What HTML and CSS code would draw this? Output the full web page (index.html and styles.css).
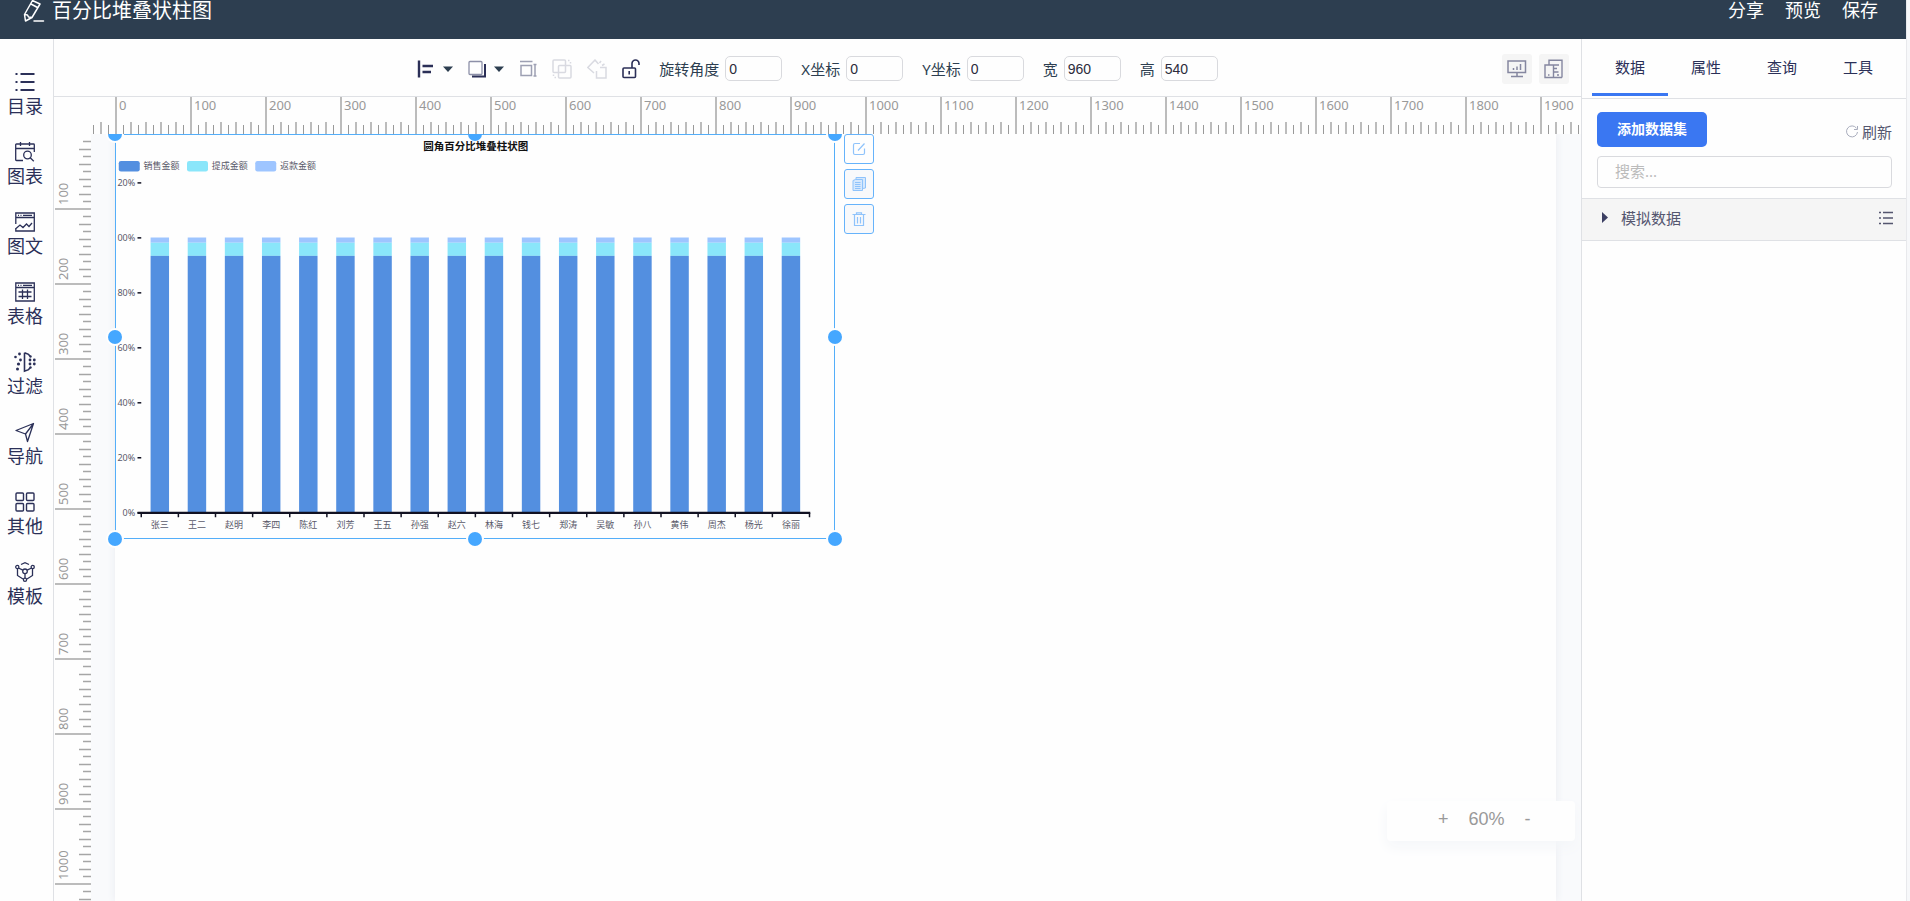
FILE: index.html
```html
<!DOCTYPE html>
<html lang="zh-CN">
<head>
<meta charset="utf-8">
<title>百分比堆叠状柱图</title>
<link rel="stylesheet" href="styles.css">
</head>
<body>
<div class="app">
  <header class="header">
    <svg class="header-icon" viewBox="0 0 22 22" fill="none" stroke="currentColor" stroke-width="1.500" stroke-linejoin="round" stroke-linecap="round"><path d="M9.500 .5 17 4 9 17.500 2.500 21 1.500 14.500zM8 4l6.500 3.500M1.500 14.500l3 .5 1 2 3.500.5M11 21h9.500"/></svg>
    <h1 class="header-title">百分比堆叠状柱图</h1>
    <nav class="header-actions">
      <a href="#share">分享</a>
      <a href="#preview">预览</a>
      <a href="#save">保存</a>
    </nav>
  </header>

  <nav class="sidebar">
    <a class="side-item" href="#catalog">
      <svg class="side-icon" viewBox="0 0 20 20" fill="none" stroke="currentColor" stroke-width="2"><path d="M.5 2h2M5.500 2h14M.5 10h2M5.500 10h14M.5 18h2M5.500 18h14"/></svg>
      <span>目录</span>
    </a>
    <a class="side-item" href="#charts">
      <svg class="side-icon" viewBox="0 0 20 20" fill="none" stroke="currentColor" stroke-width="1.300"><path d="M8 18.500H1.500q-.8 0-.8-.8V2.800q0-.8.8-.8h17q.8 0 .8.8V10M.7 6.500h18.600M5.500 0v4M14.500 0v4"/><circle cx="12.500" cy="13" r="3.800"/><path d="m15.200 15.800 3.600 3.400"/></svg>
      <span>图表</span>
    </a>
    <a class="side-item" href="#media">
      <svg class="side-icon" viewBox="0 0 20 20" fill="none" stroke="currentColor" stroke-width="1.300"><path d="M.8 12V1h18.500v18H.8v-3M.8 5.500h18.500M3 3.300h1M5.500 3.300h1M8 3.300h9M1 16.500l4-3.500 3 2.500 3.500-3.500 2.500 2.500 3-3.500"/></svg>
      <span>图文</span>
    </a>
    <a class="side-item" href="#tables">
      <svg class="side-icon" viewBox="0 0 20 20" fill="none" stroke="currentColor" stroke-width="1.300"><path d="M.8 1h18.500v18H.8zM.8 5.500h18.500M3 3.300h1M5.500 3.300h1M8 3.300h9M3.500 10h13M3.500 14.500h13M7.500 7.500v9.500M12.500 7.500v9.500"/></svg>
      <span>表格</span>
    </a>
    <a class="side-item" href="#filters">
      <svg class="side-icon" viewBox="0 0 20 20" fill="none" stroke="currentColor" stroke-width="1.600"><path d="M9.500 .8v18.400l4-1.500 1.500-2M9.500 .8l4 1.500 1.500 2"/><g fill="currentColor" stroke="none"><circle cx="4.500" cy="2" r="1.400"/><circle cx="0.500" cy="5" r="1.300"/><circle cx="5.500" cy="8" r="1.400"/><circle cx="3.500" cy="12" r="1.600"/><circle cx="2.500" cy="17" r="1.500"/><circle cx="15" cy="8" r="1.400"/><circle cx="19.300" cy="8" r="1.400"/><circle cx="15" cy="12" r="1.400"/><circle cx="19.300" cy="12" r="1.400"/><circle cx="15.500" cy="4.500" r="1.200"/><circle cx="15.500" cy="15.500" r="1.200"/></g></svg>
      <span>过滤</span>
    </a>
    <a class="side-item" href="#navigation">
      <svg class="side-icon" viewBox="0 0 20 20" fill="none" stroke="currentColor" stroke-width="1.300" stroke-linejoin="round"><path d="M18.500 1.500 1 8.500l9.500 3.500 2 7.500zM18.500 1.500l-8 10.500"/></svg>
      <span>导航</span>
    </a>
    <a class="side-item" href="#other">
      <svg class="side-icon" viewBox="0 0 20 20" fill="none" stroke="currentColor" stroke-width="1.400"><rect x="1" y="1" width="7.500" height="7.500" rx="1"/><rect x="11.500" y="1" width="7.500" height="7.500" rx="1"/><rect x="1" y="11.500" width="7.500" height="7.500" rx="1"/><rect x="11.500" y="11.500" width="7.500" height="7.500" rx="1"/></svg>
      <span>其他</span>
    </a>
    <a class="side-item" href="#templates">
      <svg class="side-icon" viewBox="0 0 20 20" fill="none" stroke="currentColor" stroke-width="1.300"><path d="M6 2.500 10 .7l4 1.800M2.500 7v6.500L8 17M17.500 7v6.500L12 17M3.500 6 7.800 8.200M16.500 6l-4.300 2.200M10 11.500V16"/><circle cx="10" cy="9.300" r="2.300"/><circle cx="2.300" cy="5" r="1.600"/><circle cx="17.700" cy="5" r="1.600"/><circle cx="10" cy="17.800" r="1.600"/></svg>
      <span>模板</span>
    </a>
  </nav>

  <main class="workspace">
    <div class="toolbar">
      <div class="tools">
        <div class="tool-icons">
          <button class="tool" aria-label="对齐">
            <svg width="18" height="20" viewBox="0 0 18 20" fill="none" stroke="currentColor" stroke-width="2.400"><path d="M2 1.500v17M5.500 7H16M5.500 13h8.500"/></svg>
            <svg class="caret" width="10" height="6" viewBox="0 0 10 6"><path d="M0 .5h10L5 6z"/></svg>
          </button>
          <button class="tool" aria-label="图层">
            <svg width="18" height="20" viewBox="0 0 18 20" fill="none"><rect x="1" y="2.500" width="13" height="13" rx="1" stroke="#8d90a8" stroke-width="1.300"/><path d="M17 5v12.500H4" stroke="currentColor" stroke-width="2"/></svg>
            <svg class="caret" width="10" height="6" viewBox="0 0 10 6"><path d="M0 .5h10L5 6z"/></svg>
          </button>
          <button class="tool tool-muted" aria-label="等尺寸">
            <svg width="18" height="20" viewBox="0 0 18 20" fill="none" stroke="currentColor" stroke-width="1.500"><path d="M2 6.500h10.500v10H2zM1 2.500h12.500M16 6v11M14.500 5.500h3M14.500 17h3"/></svg>
          </button>
          <button class="tool tool-off" aria-label="组合">
            <svg width="20" height="20" viewBox="0 0 20 20" fill="none" stroke="currentColor" stroke-width="1.500"><rect x="1" y="1" width="12.500" height="12.500" rx="1"/><rect x="6.500" y="6.500" width="12.500" height="12.500" rx="1"/><path d="M16 1.500h1.500M18.500 3v1.500M4 18.500H2.500M1.500 17v-1.500"/></svg>
          </button>
          <button class="tool tool-off" aria-label="取消组合">
            <svg width="20" height="20" viewBox="0 0 20 20" fill="none" stroke="currentColor" stroke-width="1.500"><path d="M11.500 5 8 1 .8 8.500 7 14M13 8.500h6v10.500h-9.500V12M12.500 4 14 2M15 6.500l2.500-1.500"/></svg>
          </button>
          <button class="tool" aria-label="解锁">
            <svg width="18" height="20" viewBox="0 0 18 20" fill="none" stroke="currentColor" stroke-width="1.600"><rect x="1" y="9" width="12.500" height="9.500" rx="1"/><path d="M7.200 12v3.500M10 9V4.500a3.500 3.500 0 0 1 7 0V6"/></svg>
          </button>
        </div>
        <label class="field">旋转角度<input type="text" value="0"></label>
        <label class="field">X坐标<input type="text" value="0"></label>
        <label class="field">Y坐标<input type="text" value="0"></label>
        <label class="field">宽<input type="text" value="960"></label>
        <label class="field">高<input type="text" value="540"></label>
      </div>
      <div class="view-buttons">
        <button class="view-button" aria-label="画布显示">
          <svg width="20" height="18" viewBox="0 0 20 18" fill="none" stroke="currentColor" stroke-width="1.500"><rect x="1" y="1" width="17.500" height="11.500"/><path d="M6.500 10V8M10 10V6.500M13.500 10V4M10 12.500V16M4 16.500h12"/></svg>
        </button>
        <button class="view-button" aria-label="标尺">
          <svg width="20" height="20" viewBox="0 0 20 20" fill="none" stroke="currentColor" stroke-width="1.400"><path d="M5 6V1.200h13V18.500M1 6h8.500v12.500H1zM9.500 18.500H18M10 6h5M10 9.500h3M10 13h4.500M4 16h1.500M13 16h2"/></svg>
        </button>
      </div>
    </div>

    <div class="editor">
      <div class="ruler-x">
        <svg class="ticks" aria-hidden="true">
          <defs><pattern id="tx" x="24" width="75" height="37" patternUnits="userSpaceOnUse">
            <path d="M1 0V37" stroke="#a6a6a6" stroke-width="1.500"/>
            <path d="M16 25v12M31 25v12M46 25v12M61 25v12" stroke="#a6a6a6" stroke-width="1.500"/>
            <path d="M8.500 28v9M23.500 28v9M38.500 28v9M53.500 28v9M68.500 28v9" stroke="#999"/>
          </pattern></defs>
          <rect x="0" y="25" width="24" height="12" fill="url(#tx)"/>
          <rect x="24" width="100%" height="37" fill="url(#tx)"/>
        </svg>
        <ol class="marks-x"><li>0</li><li>100</li><li>200</li><li>300</li><li>400</li><li>500</li><li>600</li><li>700</li><li>800</li><li>900</li><li>1000</li><li>1100</li><li>1200</li><li>1300</li><li>1400</li><li>1500</li><li>1600</li><li>1700</li><li>1800</li><li>1900</li></ol>
      </div>
      <div class="ruler-y">
        <svg class="ticks" aria-hidden="true">
          <defs><pattern id="ty" y="1" width="37" height="75" patternUnits="userSpaceOnUse">
            <path d="M1 74H37" stroke="#a6a6a6" stroke-width="1.500"/>
            <path d="M25 14.500h12M25 29.500h12M25 44.500h12M25 59.500h12" stroke="#a6a6a6" stroke-width="1.500"/>
            <path d="M29 6.500h8M29 21.500h8M29 36.500h8M29 51.500h8M29 66.500h8" stroke="#a6a6a6" stroke-width="1.500"/>
          </pattern></defs>
          <rect y="1" width="37" height="100%" fill="url(#ty)"/>
        </svg>
        <ol class="marks-y"><li>100</li><li>200</li><li>300</li><li>400</li><li>500</li><li>600</li><li>700</li><li>800</li><li>900</li><li>1000</li></ol>
      </div>

      <div class="stage">
        <div class="page">
          <div class="widget">
            <svg class="chart" viewBox="0 0 960 540" role="img" aria-label="圆角百分比堆叠柱状图"></svg>
            <span class="handle top left"></span><span class="handle top center"></span><span class="handle top right"></span>
            <span class="handle middle left"></span><span class="handle middle right"></span>
            <span class="handle bottom left"></span><span class="handle bottom center"></span><span class="handle bottom right"></span>
            <div class="widget-actions">
              <button aria-label="编辑"><svg width="14" height="14" viewBox="0 0 14 14" fill="none" stroke="currentColor" stroke-width="1.200"><path d="M8 1.500H3Q1.500 1.500 1.500 3v8q0 1.500 1.500 1.500h8q1.500 0 1.500-1.500V6.500M6 8.500 12.500 1.500"/></svg></button>
              <button aria-label="复制"><svg width="14" height="14" viewBox="0 0 14 14" fill="none" stroke="currentColor"><path fill="#d5e8fd" d="M1 3.500 3.500 2.500H10.500V13.500H1zM4 2.500V.5h9.500V11l-3 .5M3 5.500h5.500M3 7.500h5.500M3 9.500h5.500M3 11.500h5.500"/></svg></button>
              <button aria-label="删除"><svg width="14" height="14" viewBox="0 0 14 14" fill="none" stroke="currentColor" stroke-width="1.200"><path d="M.5 2.500h13M4.500 2.500V.8h5v1.700M2.500 2.500v11h9v-11M5.500 5v6.500M8.500 5v6.500"/></svg></button>
            </div>
          </div>
        </div>
      </div>
      <div class="zoom-box">
        <button>+</button><output>60%</output><button>-</button>
      </div>
    </div>
  </main>

  <aside class="panel">
    <nav class="tabs">
      <a class="tab active" href="#data">数据</a>
      <a class="tab" href="#props">属性</a>
      <a class="tab" href="#query">查询</a>
      <a class="tab" href="#tools">工具</a>
    </nav>
    <div class="panel-tools">
      <div class="panel-row">
        <button class="primary">添加数据集</button>
        <button class="refresh"><svg width="14" height="14" viewBox="0 0 14 14" fill="none" stroke="#a9adbd"><path d="M11.500 3.200a5.500 5.500 0 1 0 1 3.800M12.500 1v3.500H9"/></svg>刷新</button>
      </div>
      <input class="search" type="text" placeholder="搜索..." aria-label="搜索">
    </div>
    <div class="dataset">
      <svg class="dataset-caret" width="6" height="12" viewBox="0 0 6 12"><path d="M0 0v11l6-5.500z" fill="currentColor"/></svg>
      <span>模拟数据</span>
      <button class="dataset-menu" aria-label="菜单"><svg width="14" height="14" viewBox="0 0 14 14" fill="none" stroke="currentColor" stroke-width="1.500"><path d="M0 1.500h2M4 1.500h10M0 7h2M4 7h10M0 12.500h2M4 12.500h10"/></svg></button>
    </div>
  </aside>
</div>
<script src="chart.js"></script>
</body>
</html>
```
FILE: styles.css
```css
* { box-sizing: border-box; }

body {
  margin: 0;
  background: #f7f8fa;
  color: #2b3058;
  font-family: "Noto Sans", "Noto Sans CJK SC", sans-serif;
  font-size: 15px;
}

a { color: inherit; text-decoration: none; }
ol { margin: 0; padding: 0; list-style: none; }
svg { display: block; flex: none; }

button {
  padding: 0;
  border: 0;
  background: none;
  color: inherit;
  font: inherit;
}

.app {
  display: grid;
  grid-template: auto 1fr / 54px 1fr 325px;
  height: 100vh;
  margin-right: 4px;
  background: #fefefe;
  box-shadow: 1px 0 #e8e9ec;
  overflow: hidden;
}

.header {
  grid-column: 1 / -1;
  display: flex;
  align-items: flex-start;
  height: 39px;
  padding: 0 28px 0 23px;
  background: #2d3e50;
  color: #fff;
}
.header-icon { width: 22px; height: 22px; margin-right: 7px; }
.header-title { margin: 0; font-size: 20px; font-weight: 400; line-height: 22px; }
.header-actions { display: flex; gap: 21px; margin-left: auto; font-size: 18px; line-height: 20px; }

.sidebar {
  display: flex;
  flex-direction: column;
  gap: 24px;
  padding: 33px 3px 0 0;
  border-right: 1px solid #dfe1e5;
}
.side-item {
  display: flex;
  flex-direction: column;
  align-items: center;
  gap: 4px;
  height: 46px;
  font-size: 18px;
  line-height: 20px;
}
.side-icon { width: 20px; height: 20px; overflow: visible; }

.workspace { display: flex; flex-direction: column; min-width: 0; min-height: 0; }

.toolbar {
  display: grid;
  grid-template-columns: 1fr auto 1fr;
  align-items: center;
  height: 58px;
  padding: 2px 12px 0;
  border-bottom: 1px solid #dfe1e5;
}
.tools { grid-column: 2; display: flex; align-items: center; gap: 19px; }
.tool-icons { display: flex; align-items: center; gap: 15px; color: #2b2f57; }
.tool { display: flex; align-items: center; gap: 8px; }
.tool-muted { color: #9da0b3; }
.tool-off { color: #d9dae1; }
.caret { fill: #2d3e50; }
.field { display: flex; align-items: center; gap: 6px; color: #2d3e50; line-height: 24px; }
.field input {
  width: 57px;
  height: 25px;
  padding: 0 3px;
  border: 1px solid #d9dade;
  border-radius: 5px;
  background: #fefefe;
  color: #2b2b3c;
  font: 14px "Liberation Sans", Arial, sans-serif;
}
.view-buttons { display: flex; justify-content: flex-end; gap: 7px; }
.view-button {
  display: grid;
  place-items: center;
  width: 30px;
  height: 30px;
  border-radius: 3px;
  background: #f5f5f5;
  color: #8587a0;
}

.editor {
  position: relative;
  flex: 1;
  display: grid;
  grid-template: 37px 1fr / 37px 1fr;
  min-height: 0;
  overflow: hidden;
  color: #999;
  font-size: 13px;
}
.ruler-x { grid-column: 2; position: relative; overflow: hidden; }
.ruler-y { grid-row: 2; position: relative; overflow: hidden; }
.ticks { position: absolute; inset: 0; width: 100%; height: 100%; }
.marks-x { display: flex; padding-left: 24px; line-height: 17px; }
.marks-x li { flex: none; width: 75px; padding-left: 4px; }
.marks-y li {
  height: 75px;
  padding-top: 4px;
  width: 18px;
  line-height: 18px;
  writing-mode: vertical-rl;
  transform: rotate(180deg);
}

.stage { min-width: 0; padding: 0 25px 0 24px; background: #f9fafc; overflow: hidden; }
.page { height: 100%; background: #fefefe; box-shadow: 0 0 8px #e9ebf0; }
.widget { position: relative; width: 720px; height: 405px; outline: 1px solid #54aef9; outline-offset: -1px; }
.chart { width: 100%; height: 100%; fill: #5a5a6a; font-size: 12px; }
.chart-title { fill: #111; font-size: 14px; font-weight: 700; text-anchor: middle; }
.label-x { text-anchor: middle; }
.label-y { text-anchor: end; }
.axis { stroke: #111122; stroke-width: 2; fill: none; }
.axis-base { stroke-width: 3; }
.sales { fill: #538fe0; }
.commission { fill: #8ae6fa; }
.refund { fill: #9ec5ff; }

.handle {
  position: absolute;
  width: 14px;
  height: 14px;
  margin: -7px;
  border-radius: 50%;
  background: #45a7ff;
  box-shadow: 0 0 0 2px #fefefe;
}
.handle.top.center { box-shadow: none; }
.top { top: 0; }
.middle { top: 50%; }
.bottom { top: 100%; }
.left { left: 0; }
.center { left: 50%; }
.right { left: 100%; }

.widget-actions { position: absolute; top: 0; left: 100%; display: grid; gap: 5px; margin-left: 9px; }
.widget-actions button {
  display: grid;
  place-items: center;
  width: 30px;
  height: 30px;
  border: 1px solid #66b3fb;
  border-radius: 3px;
  background: #f8f9fb;
  color: #8fc3fb;
}
.widget-actions button:first-child { background: #fefefe; }

.zoom-box {
  position: absolute;
  right: 6px;
  bottom: 60px;
  display: flex;
  gap: 20px;
  width: 188px;
  height: 40px;
  padding: 0 50px 4px 51px;
  border-radius: 4px;
  background: #fefefe;
  box-shadow: 0 6px 14px #f4f6f9;
  font: 18px/36px "Liberation Sans", Arial, sans-serif;
}

.panel { border-left: 1px solid #dfe1e5; }
.tabs { display: flex; height: 60px; padding: 0 10px 2px; border-bottom: 1px solid #dfe1e5; }
.tab { flex: 1; text-align: center; line-height: 57px; }
.tab.active { border-bottom: 3px solid #3a77f2; }
.panel-tools { display: grid; gap: 9px; padding: 13px 14px 10px 15px; }
.panel-row { display: flex; justify-content: space-between; align-items: center; }
.primary {
  width: 110px;
  height: 35px;
  padding-bottom: 3px;
  border-radius: 5px;
  background: #3a77f2;
  color: #fff;
  font-size: 14px;
  font-weight: 700;
}
.refresh { display: flex; align-items: center; gap: 3px; padding-top: 4px; color: #54566f; }
.search {
  width: 100%;
  height: 32px;
  padding: 0 17px 2px;
  border: 1px solid #d9dade;
  border-radius: 4px;
  background: #fefefe;
  font: inherit;
}
.search::placeholder { color: #bbb; }
.dataset {
  display: flex;
  align-items: center;
  height: 43px;
  padding: 0 13px 4px 20px;
  border: solid #dfe1e5;
  border-width: 1px 0;
  background: #f5f5f5;
  color: #54566f;
}
.dataset-caret { margin-right: 13px; color: #3c3f63; }
.dataset-menu { margin-left: auto; }
```
FILE: chart.js
```js
const names = ["张三", "王二", "赵明", "李四", "陈红", "刘芳", "王五", "孙强", "赵六", "林海", "钱七", "郑涛", "吴敏", "孙八", "黄伟", "周杰", "杨光", "徐丽"];
const legend = [["sales", "销售金额", 5], ["commission", "提成金额", 96], ["refund", "返款金额", 187]];
const scale = ["0%", "20%", "40%", "60%", "80%", "00%", "20%"];
const left = 35, right = 926, base = 505, step = 73.3;
const slot = (right - left) / names.length;

let out = '<text class="chart-title" x="481" y="21">圆角百分比堆叠柱状图</text>';
for (const [key, text, x] of legend) {
  out += `<rect class="${key}" x="${x}" y="36" width="28" height="14" rx="3"/><text x="${x + 33}" y="46">${text}</text>`;
}
scale.forEach((text, i) => {
  const y = base - i * step;
  out += `<path class="axis" d="M${left - 5} ${y}h5"/><text class="label-y" x="27" y="${y + 4}">${text}</text>`;
});
names.forEach((name, i) => {
  const mid = left + (i + 0.5) * slot;
  const bar = (key, top, bottom) => `<rect class="${key}" x="${mid - 12.3}" y="${top}" width="24.6" height="${bottom - top}"/>`;
  out += bar("refund", 138, 145) + bar("commission", 145, 162.5) + bar("sales", 162.5, base);
  out += `<text class="label-x" x="${mid}" y="525">${name}</text>`;
});
for (let i = 0; i <= names.length; i++) {
  out += `<path class="axis" d="M${left + i * slot} ${base}v6"/>`;
}
out += `<path class="axis axis-base" d="M${left - 5} ${base}H${right + 1}"/>`;
document.querySelector(".chart").innerHTML = out;
```
